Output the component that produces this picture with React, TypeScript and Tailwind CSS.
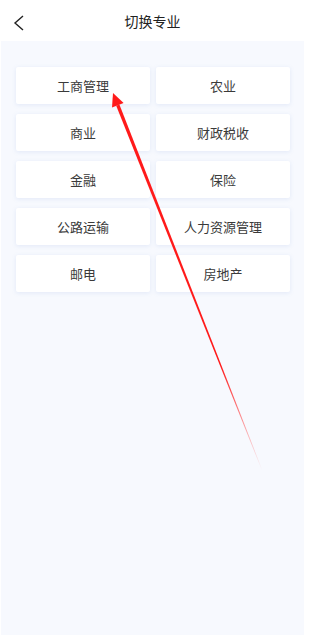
const majors = [
  "工商管理",
  "农业",
  "商业",
  "财政税收",
  "金融",
  "保险",
  "公路运输",
  "人力资源管理",
  "邮电",
  "房地产",
];

export default function App() {
  return (
    <div
      className="relative flex h-[635px] w-[305px] flex-col bg-white text-[#333]"
      style={{ fontFamily: '"Noto Sans CJK SC", "Noto Sans", sans-serif' }}
    >
      {/* header */}
      <div className="relative flex h-[41px] shrink-0 items-center justify-center">
        <svg
          className="absolute left-[13px] top-[15px]"
          width="12"
          height="17"
          viewBox="0 0 12 17"
          fill="none"
        >
          <path d="M10 1 L2 8 L10 15" stroke="#222" strokeWidth="1.4" />
        </svg>
        <span className="text-[14px] leading-none text-[#222]">切换专业</span>
      </div>

      {/* list */}
      <div className="mx-px flex-1 bg-[#f7f9fe] pl-[15px] pr-[14px] pt-[26px]">
        <div className="grid grid-cols-2 gap-x-[6px] gap-y-[10px]">
          {majors.map((m) => (
            <div
              key={m}
              className="flex h-[37px] items-center justify-center rounded-[2px] bg-white text-[13px] text-[#3a3a3a] shadow-[0_1px_4px_rgba(200,212,240,0.45)]"
            >
              {m}
            </div>
          ))}
        </div>
      </div>

      {/* red annotation arrow */}
      <svg
        className="pointer-events-none absolute left-0 top-0"
        width="305"
        height="635"
        viewBox="0 0 305 635"
      >
        <defs>
          <linearGradient
            id="fade"
            gradientUnits="userSpaceOnUse"
            x1="113"
            y1="93"
            x2="262"
            y2="470"
          >
            <stop offset="0" stopColor="#ff1a1a" stopOpacity="1" />
            <stop offset="0.72" stopColor="#ff1a1a" stopOpacity="1" />
            <stop offset="1" stopColor="#ff1a1a" stopOpacity="0" />
          </linearGradient>
        </defs>
        <polygon
          points="119.4,104.5 116.2,105.8 261.7,470.1 262.3,469.9"
          fill="url(#fade)"
        />
        <polygon points="113,93 112,107.5 123.6,102.9" fill="#ff1a1a" />
      </svg>
    </div>
  );
}
